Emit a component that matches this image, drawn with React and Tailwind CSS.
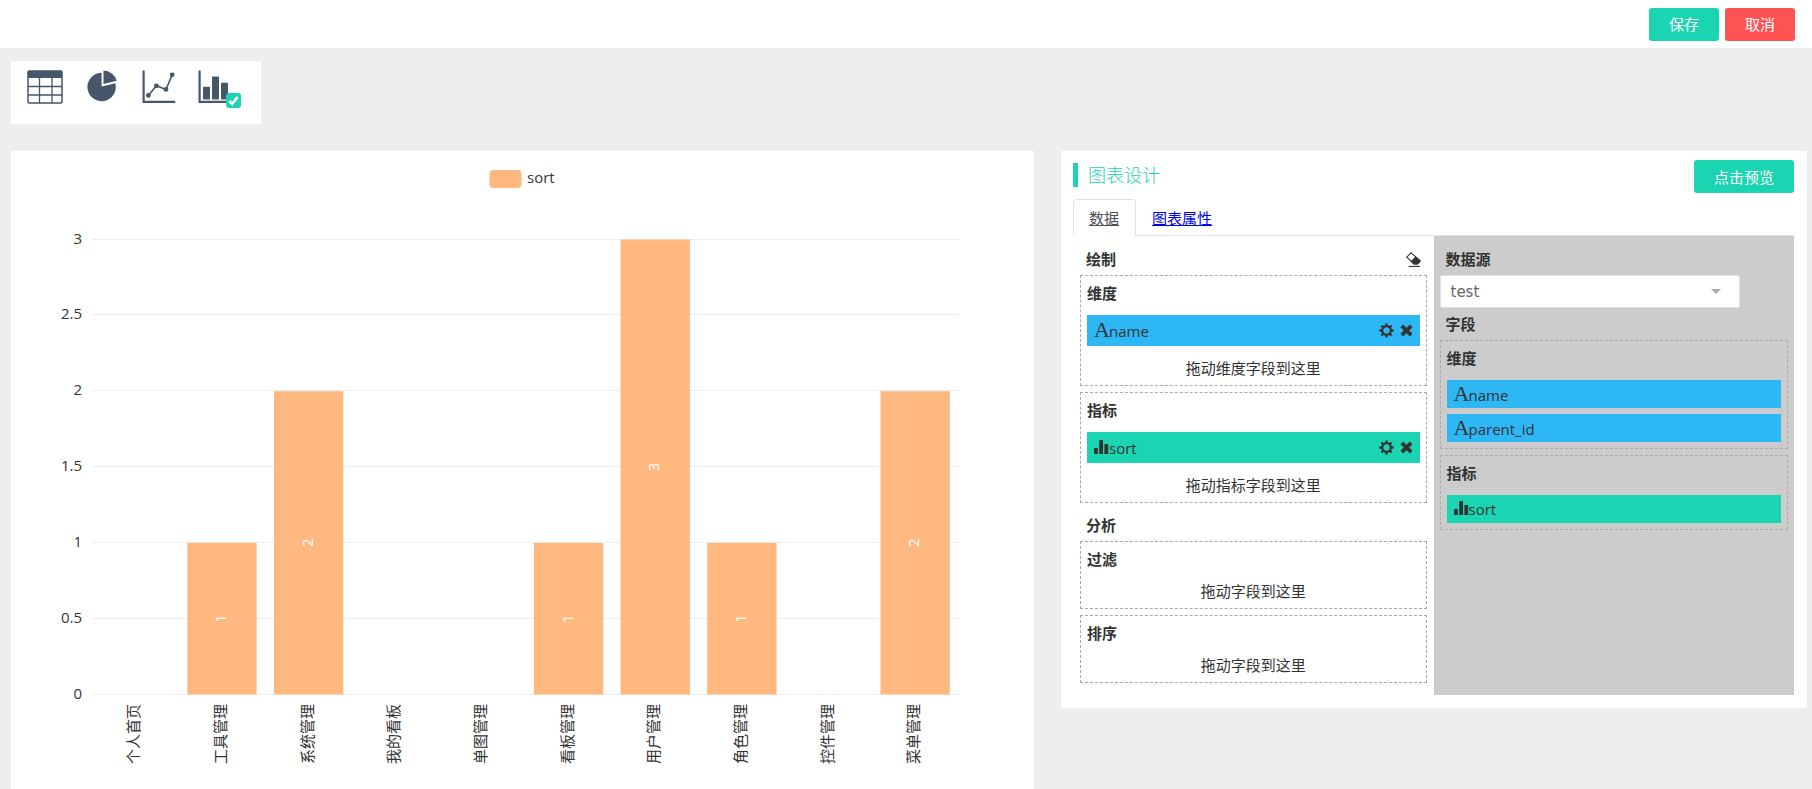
import { useState } from 'react';

const chartData = [
  { name: '个人首页', value: 0 },
  { name: '工具管理', value: 1 },
  { name: '系统管理', value: 2 },
  { name: '我的看板', value: 0 },
  { name: '单图管理', value: 0 },
  { name: '看板管理', value: 1 },
  { name: '用户管理', value: 3 },
  { name: '角色管理', value: 1 },
  { name: '控件管理', value: 0 },
  { name: '菜单管理', value: 2 },
];

const ticks = [0, 0.5, 1, 1.5, 2, 2.5, 3];

const TableIcon = () => (
  <svg width="36" height="34" viewBox="0 0 36 34" fill="none" stroke="#475669">
    <rect x="1" y="1" width="34" height="32" rx="1" strokeWidth="1.5" />
    <path d="M1 1h34v7H1z" fill="#475669" stroke="none" />
    <path d="M1 16.5h34M1 25h34M12.5 8v25M25 8v25" strokeWidth="1.3" />
  </svg>
);

const PieIcon = () => (
  <svg width="34" height="32" viewBox="-2 0 34 32" fill="#475669">
    <path d="M14.6 2.8A14.2 14.2 0 1 0 28.3 13.2L14.6 16.6z" />
    <path d="M16.5 0.6A14 14 0 0 1 29.8 10.8L16.5 14z" />
  </svg>
);

const LineIcon = () => (
  <svg width="35" height="34" viewBox="-1 0 35 34" fill="none" stroke="#475669">
    <path d="M1.6 0.5v31.4H33.2" strokeWidth="2.2" />
    <path d="M6.4 25.4L14.4 15.8L24 19.4L30.2 4.8" strokeWidth="1.6" />
    <g fill="#475669" stroke="none">
      <circle cx="6.4" cy="25.4" r="2.4" />
      <circle cx="14.4" cy="15.8" r="2.4" />
      <circle cx="24" cy="19.4" r="2.4" />
      <circle cx="30.2" cy="4.8" r="2.4" />
    </g>
  </svg>
);

const BarIcon = () => (
  <svg width="34" height="34" viewBox="0 0 34 34" fill="#475669">
    <path d="M1.6 0.5v31.4H33.2" fill="none" stroke="#475669" strokeWidth="2.2" />
    <rect x="5" y="16.8" width="7" height="12.8" rx="0.8" />
    <rect x="14" y="6.5" width="7" height="23.1" rx="0.8" />
    <rect x="23" y="12.8" width="7" height="16.8" rx="0.8" />
  </svg>
);

const CheckedBadge = () => (
  <svg width="15" height="15" viewBox="0 0 15 15" className="absolute -right-[9px] -bottom-[4px]">
    <rect width="15" height="15" rx="3" fill="#1bd5b2" />
    <path d="M3.2 8l3 2.8L11.6 4" fill="none" stroke="#fff" strokeWidth="2.6" />
  </svg>
);

const EraserIcon = () => (
  <svg width="15" height="15" viewBox="0 0 15 15">
    <path d="M5 0.8L0.8 5.2L8 12H11.6L14.4 8.8z" fill="#fff" stroke="#333" strokeWidth="1.1" strokeLinejoin="round" />
    <path d="M9.4 4.6L14.6 8.9L11.8 12.4H8L4.8 9.2z" fill="#333" />
    <path d="M2.6 14.4h11.4" stroke="#333" strokeWidth="1.1" />
  </svg>
);

const GearIcon = () => (
  <svg width="15" height="15" viewBox="0 0 15 15" fill="none" stroke="#333">
    <circle cx="7.5" cy="7.5" r="4.3" strokeWidth="2.2" />
    <path
      d="M7.5 0.4v2.6M7.5 12v2.6M0.4 7.5h2.6M12 7.5h2.6M2.5 2.5l1.8 1.8M10.7 10.7l1.8 1.8M2.5 12.5l1.8-1.8M10.7 4.3l1.8-1.8"
      strokeWidth="2.4"
    />
  </svg>
);

const CloseIcon = () => (
  <svg width="13" height="15" viewBox="0 0 13 15" fill="none" stroke="#333">
    <path d="M1.8 2.8l9.4 9.4M11.2 2.8l-9.4 9.4" strokeWidth="3.8" />
  </svg>
);

const MeasureIcon = () => (
  <svg width="15" height="14" viewBox="0 0 15 14" fill="#333">
    <rect x="0" y="8" width="3.8" height="6" rx="0.6" />
    <rect x="5.2" y="0" width="3.8" height="14" rx="0.6" />
    <rect x="10.4" y="4" width="3.8" height="10" rx="0.6" />
  </svg>
);

const Chart = () => {
  const left = 81;
  const right = 947.5;
  const top = 88.5;
  const bottom = 543.5;
  const band = (right - left) / chartData.length;
  const yOf = (v) => bottom - ((bottom - top) * v) / 3;

  return (
    <svg viewBox="0 0 1023 638" className="block w-full text-[15px]" fill="#333">
      <rect x="478.5" y="19" width="32" height="18" rx="4" fill="#ffb980" />
      <text x="516" y="32">sort</text>
      {ticks.map((t) => (
        <g key={t}>
          <line x1={left} x2={right} y1={Math.round(yOf(t)) - 0.5} y2={Math.round(yOf(t)) - 0.5} stroke="#eee" />
          <text x="71" y={yOf(t) + 4} textAnchor="end">{t}</text>
        </g>
      ))}
      {chartData.map((d, i) => {
        const cx = left + band * (i + 0.5);
        const cy = (yOf(d.value) + bottom) / 2;
        return (
          <g key={d.name}>
            <rect
              x={cx - band * 0.4}
              y={yOf(d.value)}
              width={band * 0.8}
              height={bottom - yOf(d.value)}
              fill="#ffb980"
            />
            <text transform={`translate(${cx + 4} ${cy}) rotate(-90)`} textAnchor="middle" fill="#fff">
              {d.value}
            </text>
            <text transform={`translate(${cx + 4} 553) rotate(-90)`} textAnchor="end">
              {d.name}
            </text>
          </g>
        );
      })}
    </svg>
  );
};

const SectionTitle = ({ children, action }) => (
  <div className="mb-[5px] flex items-center justify-between px-[6px] pt-[5px]">
    <h3 className="font-bold">{children}</h3>
    {action}
  </div>
);

const DropBox = ({ title, hint, children }) => (
  <div className="mb-[6px] border border-dashed border-[#aaa] px-[6px] pt-[6px]">
    <h4 className="mb-[10px] font-bold">{title}</h4>
    {children && <div className="pt-px">{children}</div>}
    {hint && <p className="mb-[6px] text-center">{hint}</p>}
  </div>
);

const FieldLabel = ({ type, name }) => (
  <span className="flex items-baseline">
    {type === 'measure' ? (
      <MeasureIcon />
    ) : (
      <span className="w-[15px] font-['Liberation_Serif',serif] text-[22px]">A</span>
    )}
    <span>{name}</span>
  </span>
);

const SelectedField = ({ type, name }) => (
  <div
    className={`mb-[11px] flex h-[31px] items-center justify-between px-[7px] ${
      type === 'measure' ? 'bg-[#1bd5b2]' : 'bg-[#2db7f5]'
    }`}
  >
    <FieldLabel type={type} name={name} />
    <span className="flex items-center gap-[6px]">
      <button type="button" aria-label="设置"><GearIcon /></button>
      <button type="button" aria-label="删除"><CloseIcon /></button>
    </span>
  </div>
);

const SourceField = ({ type, name }) => (
  <div
    className={`mb-[6px] flex h-[28px] items-center px-[7px] ${
      type === 'measure' ? 'bg-[#1bd5b2]' : 'bg-[#2db7f5]'
    }`}
  >
    <FieldLabel type={type} name={name} />
  </div>
);

const App = () => {
  const [source, setSource] = useState('test');

  return (
    <div className="min-h-screen bg-[#eee] font-['Open_Sans','Noto_Sans_CJK_SC',sans-serif] text-[15px] leading-[22px] text-[#333]">
      {/* Top bar */}
      <header className="flex h-[48px] items-center justify-end gap-[6px] bg-white pr-[17px]">
        <button type="button" className="h-[33px] w-[70px] rounded-[3px] bg-[#1bd5b2] text-white">保存</button>
        <button type="button" className="h-[33px] w-[70px] rounded-[3px] bg-[#ff5252] text-white">取消</button>
      </header>

      {/* Chart types */}
      <div className="mt-[13px] ml-[11px] flex h-[63px] w-[250px] items-start gap-[22px] bg-white px-[16px] pt-[9px]">
        <button type="button" aria-label="表格"><TableIcon /></button>
        <button type="button" aria-label="饼图"><PieIcon /></button>
        <button type="button" aria-label="折线图"><LineIcon /></button>
        <button type="button" aria-label="柱状图" className="relative">
          <BarIcon />
          <CheckedBadge />
        </button>
      </div>

      <main className="mt-[27px] grid grid-cols-[7fr_5fr] items-start">
        <section className="mr-[23px] ml-[11px] bg-white">
          <Chart />
        </section>

        {/* Chart design */}
        <section className="mr-[5px] ml-[4px] bg-white pt-[9px] pr-[13px] pb-[13px] pl-[12px]">
          <div className="flex items-start justify-between">
            <h2 className="mt-[3px] border-l-[5px] border-[#1bd5b2] pl-[10px] text-[18px] leading-[24px] font-light text-[#1bd5b2]">
              图表设计
            </h2>
            <button type="button" className="h-[33px] w-[100px] rounded-[3px] bg-[#1bd5b2] text-white">点击预览</button>
          </div>

          <nav className="mt-[6px] flex border-b border-[#dee2e6]">
            <a
              href="#data"
              className="-mb-px h-[37px] rounded-t-[4px] border border-b-0 border-[#dee2e6] bg-white pt-[7px] pr-[16px] pl-[15px] text-[#495057] underline"
            >
              数据
            </a>
            <a href="#props" className="px-[16px] pt-[8px] text-[#0000ee] underline">图表属性</a>
          </nav>

          <div className="grid grid-cols-2">
            <div className="px-[7px] pt-[7px] pb-[6px]">
              <SectionTitle action={<button type="button" aria-label="清空"><EraserIcon /></button>}>绘制</SectionTitle>
              <DropBox title="维度" hint="拖动维度字段到这里">
                <SelectedField type="dimension" name="name" />
              </DropBox>
              <DropBox title="指标" hint="拖动指标字段到这里">
                <SelectedField type="measure" name="sort" />
              </DropBox>
              <SectionTitle>分析</SectionTitle>
              <DropBox title="过滤" hint="拖动字段到这里" />
              <DropBox title="排序" hint="拖动字段到这里" />
            </div>

            <div className="bg-[#ccc] px-[6px] pt-[7px]">
              <SectionTitle><label htmlFor="source">数据源</label></SectionTitle>
              <div className="relative w-[300px]">
                <select
                  id="source"
                  value={source}
                  onChange={(e) => setSource(e.target.value)}
                  className="block h-[33px] w-full appearance-none rounded-[2px] border border-[#e0e0e0] bg-white px-[10px] font-['DejaVu_Sans',sans-serif] text-[#666]"
                >
                  <option value="test">test</option>
                </select>
                <span className="pointer-events-none absolute top-[14px] right-[19px] border-x-[5px] border-t-[5px] border-x-transparent border-t-[#aaa]" />
              </div>
              <SectionTitle>字段</SectionTitle>
              <DropBox title="维度">
                <SourceField type="dimension" name="name" />
                <SourceField type="dimension" name="parent_id" />
              </DropBox>
              <DropBox title="指标">
                <SourceField type="measure" name="sort" />
              </DropBox>
            </div>
          </div>
        </section>
      </main>
    </div>
  );
};

export default App;
